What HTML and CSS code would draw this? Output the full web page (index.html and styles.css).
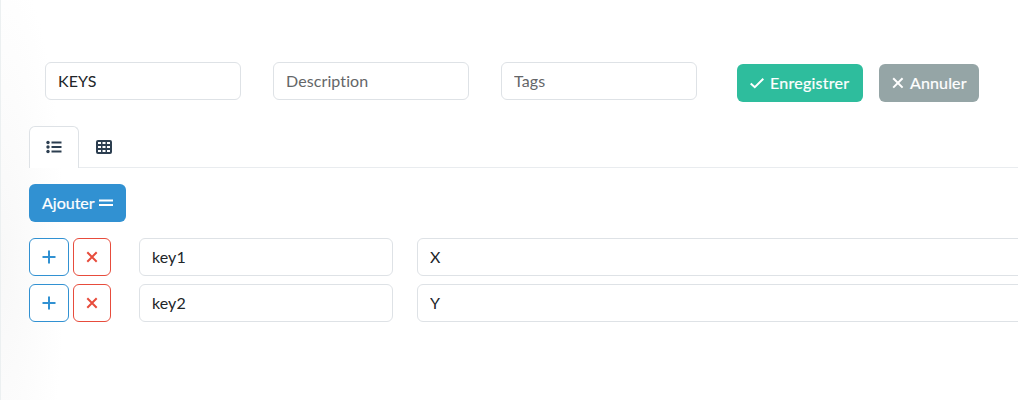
FILE: index.html
```html
<!DOCTYPE html>
<html lang="fr">
<head>
<meta charset="utf-8">
<title>KEYS</title>
<link rel="stylesheet" href="styles.css">
</head>
<body>
<main class="panel">
  <form class="header">
    <input class="field" type="text" value="KEYS">
    <input class="field" type="text" placeholder="Description">
    <input class="field" type="text" placeholder="Tags">
    <div class="actions">
      <button class="btn save" type="button"><svg class="icon-check" width="14" height="16" viewBox="0 0 14 16"><path d="M.7 8.4 4.800 12.200 13.300 3.800"/></svg><span>Enregistrer</span></button>
      <button class="btn cancel" type="button"><svg class="icon-cancel" width="12" height="16" viewBox="0 0 12 16"><path d="M1.200 3.200 10.600 12.600M10.600 3.200 1.200 12.600"/></svg><span>Annuler</span></button>
    </div>
  </form>
  <nav class="tabs">
    <a class="tab active"><svg width="16" height="16" viewBox="0 0 16 16"><g class="fill"><circle cx="2" cy="3.500" r="1.700"/><circle cx="2" cy="8" r="1.700"/><circle cx="2" cy="12.500" r="1.700"/></g><path d="M5.500 3.500h10M5.500 8h10M5.500 12.500h10"/></svg></a>
    <a class="tab"><svg width="16" height="16" viewBox="0 0 16 16"><path class="fill" fill-rule="evenodd" d="M2 1h12a2 2 0 0 1 2 2v10a2 2 0 0 1-2 2H2a2 2 0 0 1-2-2V3a2 2 0 0 1 2-2zM2 3v2h3V3zM6.500 3v2h3V3zM11 3v2h3V3zM2 7v2h3V7zM6.500 7v2h3V7zM11 7v2h3V7zM2 11v2h3v-2zM6.500 11v2h3v-2zM11 11v2h3v-2z"/></svg></a>
  </nav>
  <button class="btn add" type="button"><span>Ajouter</span><svg width="14" height="16" viewBox="0 0 14 16"><path d="M0 5.500h14M0 10h14"/></svg></button>
  <div class="rows">
    <div class="row">
      <button class="btn plus" type="button"><svg width="14" height="14" viewBox="0 0 14 14"><path d="M7 .5v13M.5 7h13"/></svg></button>
      <button class="btn remove" type="button"><svg width="12" height="12" viewBox="0 0 12 12"><path d="m1.300 1.300 9.400 9.400m0-9.400-9.400 9.400"/></svg></button>
      <input class="field key" type="text" value="key1">
      <input class="field value" type="text" value="X">
    </div>
    <div class="row">
      <button class="btn plus" type="button"><svg width="14" height="14" viewBox="0 0 14 14"><path d="M7 .5v13M.5 7h13"/></svg></button>
      <button class="btn remove" type="button"><svg width="12" height="12" viewBox="0 0 12 12"><path d="m1.300 1.300 9.400 9.400m0-9.400-9.400 9.400"/></svg></button>
      <input class="field key" type="text" value="key2">
      <input class="field value" type="text" value="Y">
    </div>
  </div>
</main>
</body>
</html>
```
FILE: styles.css
```css
* { box-sizing: border-box; }
body {
  margin: 0;
  height: 400px;
  overflow: hidden;
  background: #fff;
  color: #212529;
  font: 16px/24px Lato, sans-serif;
  font-variant-ligatures: none;
}
.panel {
  height: 400px;
  padding: 62px 0 0 28px;
  border-left: 1px solid #ecf0f1;
  background: radial-gradient(ellipse 64px 300px at 0 260px, #f8f8f8, #fff);
}
.header {
  display: flex;
  align-items: flex-start;
  gap: 32px;
  height: 64px;
  padding-left: 16px;
}
.field {
  width: 196px;
  height: 38px;
  padding: 5px 12px 7px;
  border: 1px solid #dee2e6;
  border-radius: 6px;
  background: #fff;
  color: #212529;
  font: inherit;
  font-variant-ligatures: none;
  letter-spacing: .1px;
}
.field::placeholder { color: #646668; opacity: 1; }
.actions {
  display: flex;
  gap: 16px;
  padding: 2px 0 0 8px;
}
.btn {
  display: flex;
  align-items: center;
  height: 38px;
  padding: 0 12px;
  border: 1px solid transparent;
  border-radius: 6px;
  color: #fff;
  font: inherit;
  -webkit-text-stroke: .2px currentColor;
  white-space: nowrap;
}
svg {
  flex: none;
  fill: none;
  stroke: currentColor;
  stroke-width: 2;
}
.fill { fill: currentColor; stroke: none; }
.save { width: 126px; gap: 6px; background: #2ebd9d; letter-spacing: .25px; }
.cancel { width: 100px; gap: 6px; background: #95a5a6; letter-spacing: .15px; }
.tabs {
  display: flex;
  height: 42px;
  border-bottom: 1px solid #e9ecef;
}
.tab {
  display: flex;
  align-items: center;
  justify-content: center;
  width: 50px;
  height: 42px;
  padding-bottom: 1px;
  border: 1px solid transparent;
  border-bottom: 0;
  border-radius: 6px 6px 0 0;
  color: #2c3e50;
}
.active {
  border-color: #dee2e6;
  background: #fff;
}
.add {
  width: 97px;
  gap: 4px;
  margin-top: 16px;
  background: #3191d2;
}
.rows {
  display: grid;
  gap: 8px;
  margin-top: 16px;
}
.row { display: flex; }
.plus, .remove {
  justify-content: center;
  padding: 0;
  background: #fff;
}
.plus {
  width: 40px;
  margin-right: 4px;
  border-color: #3191d2;
  color: #3191d2;
}
.remove {
  width: 38px;
  border-color: #e74c3c;
  color: #e74c3c;
}
.key { width: 254px; margin: 0 24px 0 28px; }
.value { flex: none; width: 640px; }
```
